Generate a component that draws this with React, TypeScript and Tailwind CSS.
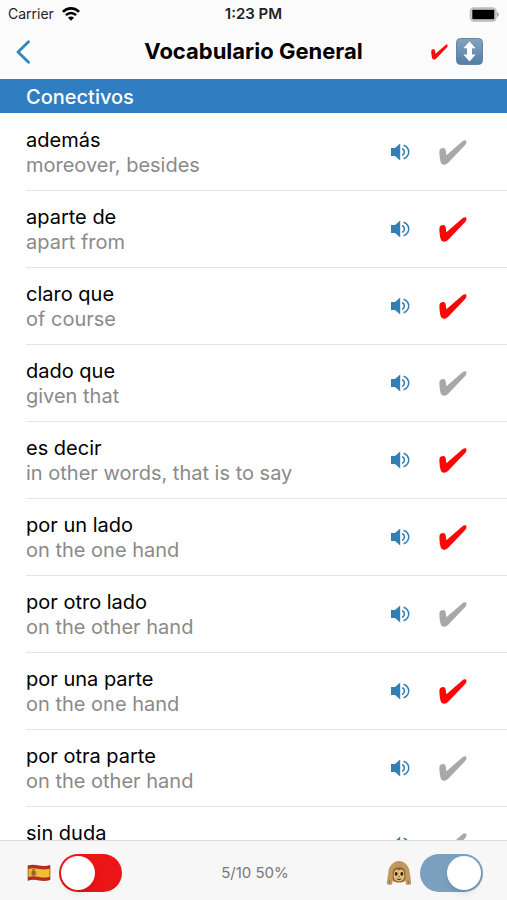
import { useState } from "react";

type Word = { term: string; meaning: string; known: boolean };

const initialWords: Word[] = [
  { term: "además", meaning: "moreover, besides", known: false },
  { term: "aparte de", meaning: "apart from", known: true },
  { term: "claro que", meaning: "of course", known: true },
  { term: "dado que", meaning: "given that", known: false },
  { term: "es decir", meaning: "in other words, that is to say", known: true },
  { term: "por un lado", meaning: "on the one hand", known: true },
  { term: "por otro lado", meaning: "on the other hand", known: false },
  { term: "por una parte", meaning: "on the one hand", known: true },
  { term: "por otra parte", meaning: "on the other hand", known: false },
  { term: "sin duda", meaning: "without a doubt", known: false },
];

const CheckMark = ({ className }: { className: string }) => (
  <svg viewBox="0 0 28 25" className={className} fill="currentColor" aria-hidden="true">
    <path d="M0.8 9.8C1.6 8.2 4.6 7.4 6 8.8C6.9 9.8 6.9 12.6 7.4 15.2L23.2 1.6C24.6 0.4 26.2 0 27 0.6C27.8 1.4 27.6 3.4 26.4 4.8L9.2 22.8C7.8 24.3 6.2 24.9 4.6 24.7C2.9 24.5 2 23.5 1.5 21.6C0.8 18.5 0.4 15 0.4 12.2C0.4 11.2 0.5 10.4 0.8 9.8Z" />
  </svg>
);

const SpeakerIcon = () => (
  <svg viewBox="0 0 20 18" className="h-[18px] w-5" fill="none" aria-hidden="true">
    <path d="M0 5H4L9.2 0.6V17.4L4 13H0Z" fill="currentColor" />
    <path d="M11.2 5.5C14.2 7.3 14.2 10.7 11.2 12.5" stroke="currentColor" strokeWidth="1.6" />
    <path d="M12.6 2.2C19.4 5 19.4 13 12.6 15.8" stroke="currentColor" strokeWidth="1.5" />
  </svg>
);

const WifiIcon = () => (
  <svg viewBox="0 0 18 14" className="h-[14px] w-[18px]" fill="none" aria-hidden="true">
    <path d="M0.9 4.9C5.4 0.3 12.6 0.3 17.1 4.9" stroke="black" strokeWidth="2.7" />
    <path d="M3.9 8.1C6.8 5.2 11.2 5.2 14.1 8.1" stroke="black" strokeWidth="2.4" />
    <path d="M9 13.7L6 10.7C7.7 9.1 10.3 9.1 12 10.7Z" fill="black" />
  </svg>
);

const BatteryIcon = () => (
  <svg viewBox="0 0 30 15" className="h-[15px] w-[30px]" aria-hidden="true">
    <rect x="1.5" y="1" width="25.5" height="13" rx="3.5" fill="#d4d4d4" stroke="#b9b9b9" strokeWidth="1.4" />
    <rect x="3.3" y="2.8" width="22" height="9.4" rx="0.8" fill="black" />
    <path d="M28 5C30.5 6 30.5 9 28 10Z" fill="#aaa" />
  </svg>
);

const BackIcon = () => (
  <svg viewBox="0 0 14 24" className="h-6 w-[14px]" fill="none" aria-hidden="true">
    <path d="M12.5 1.8L2 12L12.5 22.2" stroke="#3286c2" strokeWidth="2.8" strokeLinecap="round" strokeLinejoin="round" />
  </svg>
);

const SortIcon = () => (
  <svg viewBox="0 0 27 27" className="size-[27px]" aria-hidden="true">
    <defs>
      <linearGradient id="sort-face" x1="0" y1="0" x2="0" y2="1">
        <stop offset="0" stopColor="#84a3bd" />
        <stop offset="1" stopColor="#537ea6" />
      </linearGradient>
    </defs>
    <rect x="0.5" y="0.5" width="26" height="26" rx="4" fill="url(#sort-face)" stroke="#6485a4" />
    <path d="M13.5 3.5L19.6 10.3H16V16.5H19.6L13.5 23.5L7.4 16.5H11V10.3H7.4Z" fill="white" />
  </svg>
);

const SpainFlag = () => (
  <svg viewBox="0 0 24 18" className="h-[18px] w-6" aria-hidden="true">
    <defs>
      <clipPath id="flag-shape">
        <path d="M0.8 1.6C4.5 0.3 8 0.6 12 1.4C16 2.2 19.5 2 23.2 1V16C19.5 17.2 16 17.2 12 16.5C8 15.7 4.5 15.5 0.8 16.7Z" />
      </clipPath>
    </defs>
    <g clipPath="url(#flag-shape)">
      <rect width="24" height="18" fill="#b52d24" />
      <path d="M0 5.3C4.5 4 8 4.2 12 5C16 5.7 19.5 5.6 24 4.4V12.5C19.5 13.8 16 13.6 12 12.9C8 12.2 4.5 12 0 13.3Z" fill="#efc034" />
      <path d="M0 0H1.8V18H0ZM22.2 0H24V18H22.2Z" fill="#6d3825" opacity="0.45" />
      <path d="M3.6 7.3H4.6V11.6H3.6ZM8.6 7.3H9.6V11.6H8.6Z" fill="#a8823f" />
      <path d="M5 6.8H8.2V10.2C8.2 12.2 5 12.2 5 10.2Z" fill="#a5572e" />
      <path d="M5.2 6.5L5.6 5H7.7L8 6.5Z" fill="#8f6526" />
    </g>
  </svg>
);

const MonkeyIcon = () => (
  <svg viewBox="0 0 26 26" className="size-[26px]" aria-hidden="true">
    <path d="M3 14C3 6 7 1 13 1C19 1 23 6 23 14C23 20 19 22.5 13 22.5C7 22.5 3 20 3 14Z" fill="#bd9560" />
    <path d="M6 14C6 9.5 9 7.5 13 7.5C17 7.5 20 9.5 20 14C20 20 17.5 22.3 13 22.3C8.5 22.3 6 20 6 14Z" fill="#87602f" />
    <path d="M13 10.4C11 8.7 7.8 9.8 8 13.2C6.7 18 8.8 21.4 13 21.4C17.2 21.4 19.3 18 18 13.2C18.2 9.8 15 8.7 13 10.4Z" fill="#e5bd7f" />
    <path d="M8.5 3C4.5 4.5 2.6 8 2.3 12.5L0.8 22.5C0.7 24.8 2.5 25.3 3.3 24.2C4.1 25.4 6.1 25.1 6.3 23.5L6.7 16C6.6 11 7.6 7.5 10.5 5.2Z" fill="#c19a62" />
    <path d="M17.5 3C21.5 4.5 23.4 8 23.7 12.5L25.2 22.5C25.3 24.8 23.5 25.3 22.7 24.2C21.9 25.4 19.9 25.1 19.7 23.5L19.3 16C19.4 11 18.4 7.5 15.5 5.2Z" fill="#c19a62" />
    <path d="M3.3 24.2L4 20M22.7 24.2L22 20" stroke="#8b6638" strokeWidth="0.8" />
    <ellipse cx="10.2" cy="13.9" rx="1.4" ry="1.8" fill="#2b1e15" />
    <ellipse cx="15.8" cy="13.9" rx="1.4" ry="1.8" fill="#2b1e15" />
    <path d="M12.2 16.4L13 16.9L13.8 16.4" stroke="#70502f" strokeWidth="0.8" fill="none" />
    <path d="M10.5 18.4C12 18.8 14 18.8 15.5 18.4C15 20.7 11 20.7 10.5 18.4Z" fill="#613a26" />
  </svg>
);

const Header = () => (
  <header className="shrink-0 bg-[#fbfbfb]">
    <div className="grid h-7 grid-cols-3 items-center px-2 text-sm text-[#222]">
      <span className="flex items-center gap-2">
        Carrier
        <WifiIcon />
      </span>
      <span className="text-center text-[15px] font-semibold">1:23 PM</span>
      <span className="flex justify-end">
        <BatteryIcon />
      </span>
    </div>
    <div className="grid h-[51px] grid-cols-[1fr_auto_1fr] items-center px-4 pb-1">
      <button type="button" aria-label="Back" className="justify-self-start">
        <BackIcon />
      </button>
      <h1 className="text-[22px] font-bold whitespace-nowrap">Vocabulario General</h1>
      <div className="mr-2 flex items-center gap-2 justify-self-end">
        <button type="button" aria-label="Show known words">
          <CheckMark className="h-4 w-[17px] text-[#ff0a0a]" />
        </button>
        <button type="button" aria-label="Sort">
          <SortIcon />
        </button>
      </div>
    </div>
  </header>
);

type RowProps = { word: Word; onToggle: () => void };

const WordRow = ({ word, onToggle }: RowProps) => (
  <li className="ml-[26px] flex h-[77px] items-center border-b border-[#e4e4e4] pr-10">
    <div className="min-w-0 flex-1 pt-[2px] text-xl leading-[25px]">
      <p className="text-black">{word.term}</p>
      <p className="text-[#8a8a8a]">{word.meaning}</p>
    </div>
    <button type="button" aria-label={`Listen to ${word.term}`} className="mr-7 text-[#327fb5]">
      <SpeakerIcon />
    </button>
    <button type="button" aria-label={`Mark ${word.term}`} aria-pressed={word.known} onClick={onToggle}>
      <CheckMark className={`h-[25px] w-7 ${word.known ? "text-[#ff0505]" : "text-[#a8a8a8]"}`} />
    </button>
  </li>
);

const switchStyle =
  "relative h-[38px] w-[63px] appearance-none rounded-full before:absolute before:top-[2px] before:left-[2px] before:size-[34px] before:rounded-full before:bg-white before:shadow-md checked:before:left-[27px]";

const App = () => {
  const [words, setWords] = useState(initialWords);
  const [english, setEnglish] = useState(false);
  const [hidden, setHidden] = useState(true);

  const known = words.filter((w) => w.known).length;

  const toggleWord = (index: number) =>
    setWords(words.map((w, i) => (i === index ? { ...w, known: !w.known } : w)));

  return (
    <div className="flex h-screen flex-col bg-white font-[Inter,sans-serif] text-black">
      <Header />
      <main className="flex min-h-0 flex-1 flex-col">
        <h2 className="shrink-0 bg-[#307dc1] px-[26px] pt-[5px] pb-[3px] text-xl leading-[26px] font-medium text-white">
          Conectivos
        </h2>
        <ul className="min-h-0 flex-1 overflow-x-hidden overflow-y-auto pt-px [scrollbar-width:none]">
          {words.map((word, i) => (
            <WordRow key={word.term} word={word} onToggle={() => toggleWord(i)} />
          ))}
        </ul>
      </main>
      <footer className="grid shrink-0 grid-cols-3 items-center border-t border-[#dcdcdc] bg-[#f7f7f7] pt-[13px] pr-6 pb-2 pl-[27px]">
        <label className="flex items-center gap-2">
          <SpainFlag />
          <input
            type="checkbox"
            aria-label="Language"
            checked={english}
            onChange={(e) => setEnglish(e.target.checked)}
            className={`${switchStyle} bg-[#ea1517]`}
          />
        </label>
        <p className="text-center text-[15px] text-[#777]">
          {known}/{words.length} {Math.round((known / words.length) * 100)}%
        </p>
        <label className="flex items-center gap-2 justify-self-end">
          <MonkeyIcon />
          <input
            type="checkbox"
            aria-label="Hide translation"
            checked={hidden}
            onChange={(e) => setHidden(e.target.checked)}
            className={`${switchStyle} bg-[#7ba0bf]`}
          />
        </label>
      </footer>
    </div>
  );
};

export default App;
